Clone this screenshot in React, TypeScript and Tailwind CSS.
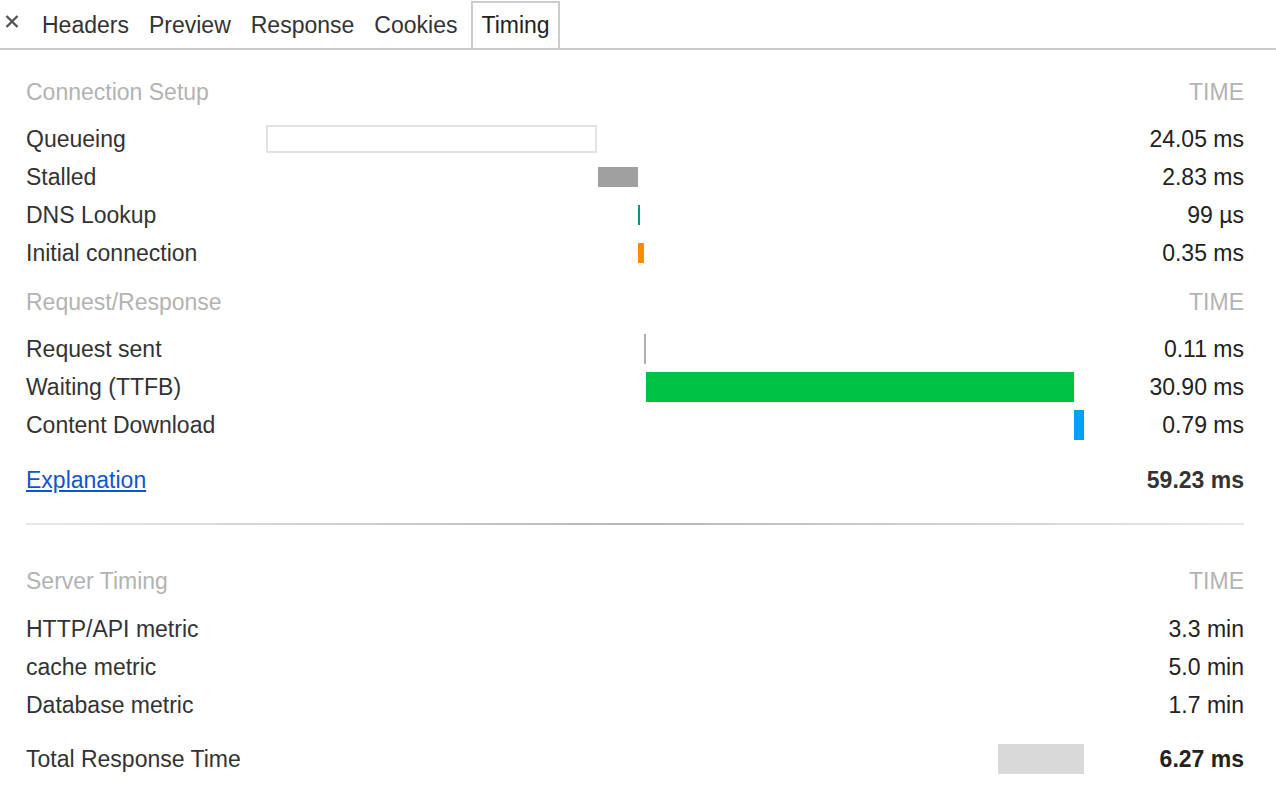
import React from "react";

type Bar = { left: number; width: number; h: number; color: string; box?: boolean };
type Row = { label: string; value: string; bars: Bar[] };

const font = { fontFamily: '"Liberation Sans", Arial, sans-serif' };

function Bars({ bars }: { bars: Bar[] }) {
  return (
    <div className="relative h-full">
      {bars.map((b, i) =>
        b.box ? (
          <div
            key={i}
            className="absolute top-1/2 -translate-y-1/2 border-2 border-[#e3e3e3] bg-white"
            style={{ left: b.left, width: b.width, height: b.h }}
          />
        ) : (
          <div
            key={i}
            className="absolute top-1/2 -translate-y-1/2"
            style={{ left: b.left, width: b.width, height: b.h, background: b.color }}
          />
        )
      )}
    </div>
  );
}

function DataRow({ row }: { row: Row }) {
  return (
    <div className="grid grid-cols-[240px_818px_160px] h-[38px] items-center">
      <div className="text-[#333]">{row.label}</div>
      <div className="h-full">
        <Bars bars={row.bars} />
      </div>
      <div className="text-right text-[#222]">{row.value}</div>
    </div>
  );
}

function SectionHeader({ title }: { title: string }) {
  return (
    <div className="flex h-[38px] items-center justify-between text-[#b3b3b3]">
      <span>{title}</span>
      <span>TIME</span>
    </div>
  );
}

const connection: Row[] = [
  { label: "Queueing", value: "24.05 ms", bars: [{ left: 0, width: 331, h: 28, color: "", box: true }] },
  { label: "Stalled", value: "2.83 ms", bars: [{ left: 332, width: 40, h: 20, color: "#a0a0a0" }] },
  { label: "DNS Lookup", value: "99 µs", bars: [{ left: 372, width: 2, h: 20, color: "#009688" }] },
  { label: "Initial connection", value: "0.35 ms", bars: [{ left: 372, width: 6, h: 20, color: "#ff8c00" }] },
];

const reqres: Row[] = [
  { label: "Request sent", value: "0.11 ms", bars: [{ left: 378, width: 2, h: 30, color: "#b0b0b0" }] },
  { label: "Waiting (TTFB)", value: "30.90 ms", bars: [{ left: 380, width: 428, h: 30, color: "#00c244" }] },
  { label: "Content Download", value: "0.79 ms", bars: [{ left: 808, width: 10, h: 30, color: "#03a0f4" }] },
];

const server: Row[] = [
  { label: "HTTP/API metric", value: "3.3 min", bars: [] },
  { label: "cache metric", value: "5.0 min", bars: [] },
  { label: "Database metric", value: "1.7 min", bars: [] },
];

export default function App() {
  const tabs = ["Headers", "Preview", "Response", "Cookies"];
  return (
    <div className="w-[1276px] h-[804px] bg-white text-[23px] overflow-hidden" style={font}>
      {/* Tab bar */}
      <div className="flex h-[50px] border-b-2 border-[#cccccc] items-end">
        <div className="w-[32px] h-full flex items-start pt-[15px] pl-[5px]">
          <svg width="14" height="13" viewBox="0 0 14 13">
            <path d="M1.5 1 L12.5 12 M12.5 1 L1.5 12" stroke="#555" strokeWidth="2.4" strokeLinecap="butt" />
          </svg>
        </div>
        {tabs.map((t) => (
          <div key={t} className="h-[47px] flex items-center px-[8px] border-2 border-transparent border-b-0 text-[#333]">
            {t}
          </div>
        ))}
        <div className="h-[47px] ml-[4px] flex items-center px-[8px] border-2 border-b-0 border-[#cccccc] text-[#222]">
          Timing
        </div>
      </div>

      {/* Content */}
      <div className="pl-[26px] pr-[32px] pt-[23px]">
        <SectionHeader title="Connection Setup" />
        <div className="mt-[9px]">
          {connection.map((r) => (
            <DataRow key={r.label} row={r} />
          ))}
        </div>

        <div className="mt-[11px]">
          <SectionHeader title="Request/Response" />
        </div>
        <div className="mt-[9px]">
          {reqres.map((r) => (
            <DataRow key={r.label} row={r} />
          ))}
        </div>

        <div className="mt-[17px] flex h-[38px] items-center justify-between">
          <a href="#" className="text-[#1155cc] underline">Explanation</a>
          <span className="font-bold text-[#333]">59.23 ms</span>
        </div>

        <div className="mt-[24px] h-[2px] bg-[linear-gradient(to_right,#e8e8e8,#b8b8b8_50%,#e8e8e8)]" />

        <div className="mt-[37px]">
          <SectionHeader title="Server Timing" />
        </div>
        <div className="mt-[10px]">
          {server.map((r) => (
            <DataRow key={r.label} row={r} />
          ))}
        </div>

        <div className="mt-[16px] grid grid-cols-[240px_818px_160px] h-[38px] items-center">
          <div className="text-[#333]">Total Response Time</div>
          <div className="h-full">
            <Bars bars={[{ left: 732, width: 86, h: 30, color: "#d9d9d9" }]} />
          </div>
          <div className="text-right font-bold text-[#222]">6.27 ms</div>
        </div>
      </div>
    </div>
  );
}
